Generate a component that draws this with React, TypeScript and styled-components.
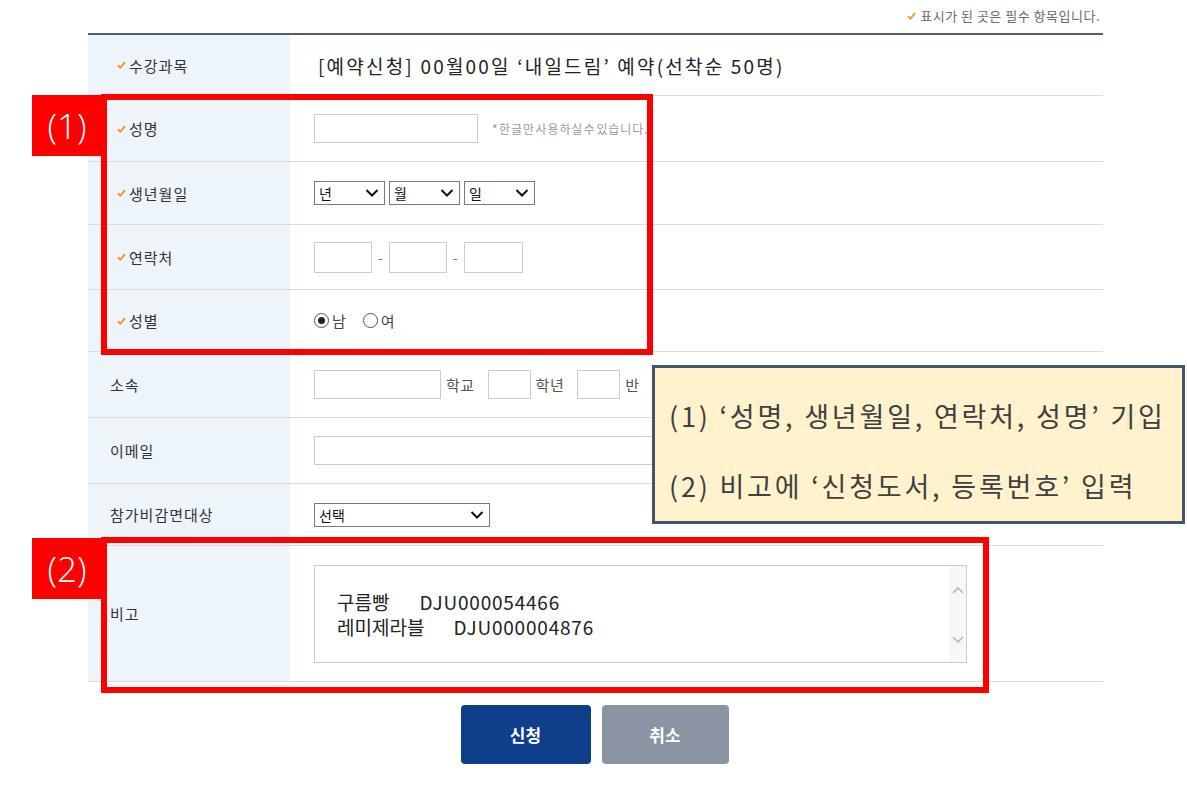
import styled, { createGlobalStyle } from "styled-components";

const GlobalStyle = createGlobalStyle`
  html, body {
    margin: 0;
    padding: 0;
    background: #ffffff;
  }
  body {
    font-family: "Noto Sans CJK KR", "Noto Sans", sans-serif;
    color: #333;
  }
`;

const Page = styled.div`
  position: relative;
  width: 1187px;
  height: 787px;
  overflow: hidden;
`;

const Container = styled.div`
  margin-left: 88px;
  width: 1015px;
`;

const Notice = styled.div`
  height: 33px;
  box-sizing: border-box;
  padding: 0 3px 2px 0;
  display: flex;
  justify-content: flex-end;
  align-items: center;
  gap: 4px;
  font-size: 13px;
  letter-spacing: 0.5px;
  color: #6a6a6a;
`;

const Table = styled.div`
  border-top: 2px solid #4d5b78;
`;

const Row = styled.div<{ $h: number }>`
  display: grid;
  grid-template-columns: 202px 1fr;
  height: ${(p) => p.$h}px;
  border-bottom: 1px solid #dcdcdc;
`;

const Label = styled.div<{ $required?: boolean }>`
  background: #edf4fa;
  display: flex;
  align-items: center;
  gap: 3px;
  padding-left: ${(p) => (p.$required ? 29 : 22)}px;
  font-size: 15px;
  letter-spacing: 1px;
  color: #333;
`;

const Value = styled.div<{ $gap?: number }>`
  display: flex;
  align-items: center;
  gap: ${(p) => p.$gap ?? 5}px;
  padding-left: 24px;
  font-size: 15px;
  color: #555;
`;

const CourseTitle = styled.span`
  padding-left: 4px;
  font-size: 19px;
  letter-spacing: 2.2px;
  color: #222;
`;

const TextInput = styled.input<{ $w: number; $h?: number }>`
  width: ${(p) => p.$w}px;
  height: ${(p) => p.$h ?? 29}px;
  box-sizing: border-box;
  border: 1px solid #cccccc;
  background: #fff;
  margin: 0;
  padding: 0 4px;
  outline: none;
`;

const Hint = styled.span`
  margin-left: 9px;
  font-size: 12px;
  letter-spacing: 0.9px;
  word-spacing: -3px;
  color: #9a9a9a;
  white-space: nowrap;
`;

const SelectWrap = styled.div<{ $w: number }>`
  position: relative;
  width: ${(p) => p.$w}px;
  height: 24px;
`;

const Select = styled.select`
  appearance: none;
  width: 100%;
  height: 100%;
  box-sizing: border-box;
  margin: 0;
  border: 1px solid #7a7a7a;
  border-radius: 0;
  background: #fff;
  padding: 0 0 0 4px;
  font-family: inherit;
  font-size: 14px;
  color: #111;
  outline: none;
`;

const Chevron = styled.svg`
  position: absolute;
  right: 6px;
  top: 50%;
  transform: translateY(-50%);
  pointer-events: none;
`;

const Dash = styled.span`
  color: #777;
  font-size: 14px;
`;

const Unit = styled.span`
  padding-right: 8px;
  font-size: 15px;
  letter-spacing: 0.5px;
  color: #555;
`;

const Mark = styled.span`
  color: #e8602c;
  font-size: 14px;
`;

const RadioGroup = styled.label`
  display: flex;
  align-items: center;
  gap: 3px;
  margin-right: 12px;
  font-size: 15px;
  color: #444;
`;

const Radio = styled.input`
  appearance: none;
  width: 15px;
  height: 15px;
  margin: 0;
  box-sizing: border-box;
  border: 1px solid #555;
  border-radius: 50%;
  background: #fff;
  display: grid;
  place-items: center;
  &:checked::after {
    content: "";
    width: 7px;
    height: 7px;
    border-radius: 50%;
    background: #222;
  }
`;

const Memo = styled.div`
  display: flex;
  width: 653px;
  height: 98px;
  box-sizing: border-box;
  border: 1px solid #cccccc;
  background: #fff;
`;

const MemoText = styled.div`
  flex: 1;
  padding: 23px 0 0 22px;
  font-size: 19px;
  line-height: 25px;
  color: #222;
`;

const MemoLine = styled.div`
  display: flex;
`;

const BookCode = styled.span<{ $gap: number }>`
  margin-left: ${(p) => p.$gap}px;
  letter-spacing: 0.8px;
`;

const ScrollTrack = styled.div`
  width: 17px;
  background: #f7f7f7;
  display: flex;
  flex-direction: column;
  justify-content: space-between;
  align-items: center;
  padding: 20px 0 18px;
`;

const Buttons = styled.div`
  display: flex;
  justify-content: center;
  gap: 11px;
  margin-top: 23px;
  padding-right: 2px;
`;

const Button = styled.button<{ $primary?: boolean; $w: number }>`
  width: ${(p) => p.$w}px;
  height: 59px;
  border: none;
  border-radius: 4px;
  background: ${(p) => (p.$primary ? "#0f3e8b" : "#8a94a3")};
  color: #fff;
  font-family: inherit;
  font-size: 17px;
  font-weight: 700;
`;

const Outline = styled.div<{ $x: number; $y: number; $w: number; $h: number }>`
  position: absolute;
  left: ${(p) => p.$x}px;
  top: ${(p) => p.$y}px;
  width: ${(p) => p.$w}px;
  height: ${(p) => p.$h}px;
  box-sizing: border-box;
  border: 6px solid #ff0000;
  pointer-events: none;
`;

const Tag = styled.div<{ $y: number }>`
  position: absolute;
  left: 32px;
  top: ${(p) => p.$y}px;
  width: 70px;
  height: 61px;
  background: #ff0000;
  color: #fff;
  display: flex;
  align-items: center;
  justify-content: center;
  font-family: "Open Sans", "Noto Sans", sans-serif;
  font-weight: 300;
  font-size: 35px;
`;

const Callout = styled.div`
  position: absolute;
  left: 652px;
  top: 365px;
  width: 533px;
  height: 159px;
  box-sizing: border-box;
  border: 3px solid #44546a;
  background: #fff2cc;
  display: flex;
  flex-direction: column;
  justify-content: center;
  gap: 35px;
  padding: 12px 0 0 14px;
  font-size: 27px;
  letter-spacing: 2.8px;
  line-height: 35px;
  color: #404040;
  white-space: nowrap;
`;

const Check = () => (
  <svg width="9" height="8" viewBox="0 0 9 8">
    <path d="M1 4.2 L3.4 6.6 L8 1.2" fill="none" stroke="#f39a1e" strokeWidth="2" />
  </svg>
);

const DropDown = ({ w, text }: { w: number; text: string }) => (
  <SelectWrap $w={w}>
    <Select defaultValue={text}>
      <option>{text}</option>
    </Select>
    <Chevron width="14" height="9" viewBox="0 0 14 9">
      <path d="M1.5 1.5 L7 7 L12.5 1.5" fill="none" stroke="#111" strokeWidth="2" />
    </Chevron>
  </SelectWrap>
);

const ScrollArrow = ({ up }: { up?: boolean }) => (
  <svg width="12" height="8" viewBox="0 0 12 8">
    <path
      d={up ? "M1 7 L6 2 L11 7" : "M1 1 L6 6 L11 1"}
      fill="none"
      stroke="#b8b8b8"
      strokeWidth="1.6"
    />
  </svg>
);

export default function App() {
  return (
    <Page>
      <GlobalStyle />
      <Container>
        <Notice>
          <Check />
          <span>표시가 된 곳은 필수 항목입니다.</span>
        </Notice>
        <Table>
          <Row $h={60}>
            <Label $required>
              <Check />
              수강과목
            </Label>
            <Value>
              <CourseTitle>[예약신청] 00월00일 ‘내일드림’ 예약(선착순 50명)</CourseTitle>
            </Value>
          </Row>
          <Row $h={65}>
            <Label $required>
              <Check />
              성명
            </Label>
            <Value>
              <TextInput $w={164} />
              <Hint>* 한글만 사용하실 수 있습니다.</Hint>
            </Value>
          </Row>
          <Row $h={62}>
            <Label $required>
              <Check />
              생년월일
            </Label>
            <Value $gap={4}>
              <DropDown w={71} text="년" />
              <DropDown w={71} text="월" />
              <DropDown w={71} text="일" />
            </Value>
          </Row>
          <Row $h={64}>
            <Label $required>
              <Check />
              연락처
            </Label>
            <Value $gap={6}>
              <TextInput $w={58} $h={31} />
              <Dash>-</Dash>
              <TextInput $w={58} $h={31} />
              <Dash>-</Dash>
              <TextInput $w={59} $h={31} />
            </Value>
          </Row>
          <Row $h={61}>
            <Label $required>
              <Check />
              성별
            </Label>
            <Value>
              <RadioGroup>
                <Radio type="radio" name="gender" defaultChecked />남
              </RadioGroup>
              <RadioGroup>
                <Radio type="radio" name="gender" />여
              </RadioGroup>
            </Value>
          </Row>
          <Row $h={65}>
            <Label>소속</Label>
            <Value>
              <TextInput $w={127} />
              <Unit>학교</Unit>
              <TextInput $w={43} />
              <Unit>학년</Unit>
              <TextInput $w={43} />
              <Unit>반</Unit>
              <Mark>»</Mark>
            </Value>
          </Row>
          <Row $h={65}>
            <Label>이메일</Label>
            <Value>
              <TextInput $w={480} />
            </Value>
          </Row>
          <Row $h={61}>
            <Label>참가비감면대상</Label>
            <Value>
              <DropDown w={176} text="선택" />
            </Value>
          </Row>
          <Row $h={135}>
            <Label>비고</Label>
            <Value>
              <Memo>
                <MemoText>
                  <MemoLine>
                    구름빵<BookCode $gap={30}>DJU000054466</BookCode>
                  </MemoLine>
                  <MemoLine>
                    레미제라블<BookCode $gap={29}>DJU000004876</BookCode>
                  </MemoLine>
                </MemoText>
                <ScrollTrack>
                  <ScrollArrow up />
                  <ScrollArrow />
                </ScrollTrack>
              </Memo>
            </Value>
          </Row>
        </Table>
        <Buttons>
          <Button $primary $w={130}>신청</Button>
          <Button $w={127}>취소</Button>
        </Buttons>
      </Container>

      <Outline $x={101} $y={94} $w={552} $h={261} />
      <Tag $y={95}>(1)</Tag>
      <Outline $x={101} $y={537} $w={888} $h={156} />
      <Tag $y={538}>(2)</Tag>

      <Callout>
        <div>(1) ‘성명, 생년월일, 연락처, 성명’ 기입</div>
        <div>(2) 비고에 ‘신청도서, 등록번호’ 입력</div>
      </Callout>
    </Page>
  );
}
